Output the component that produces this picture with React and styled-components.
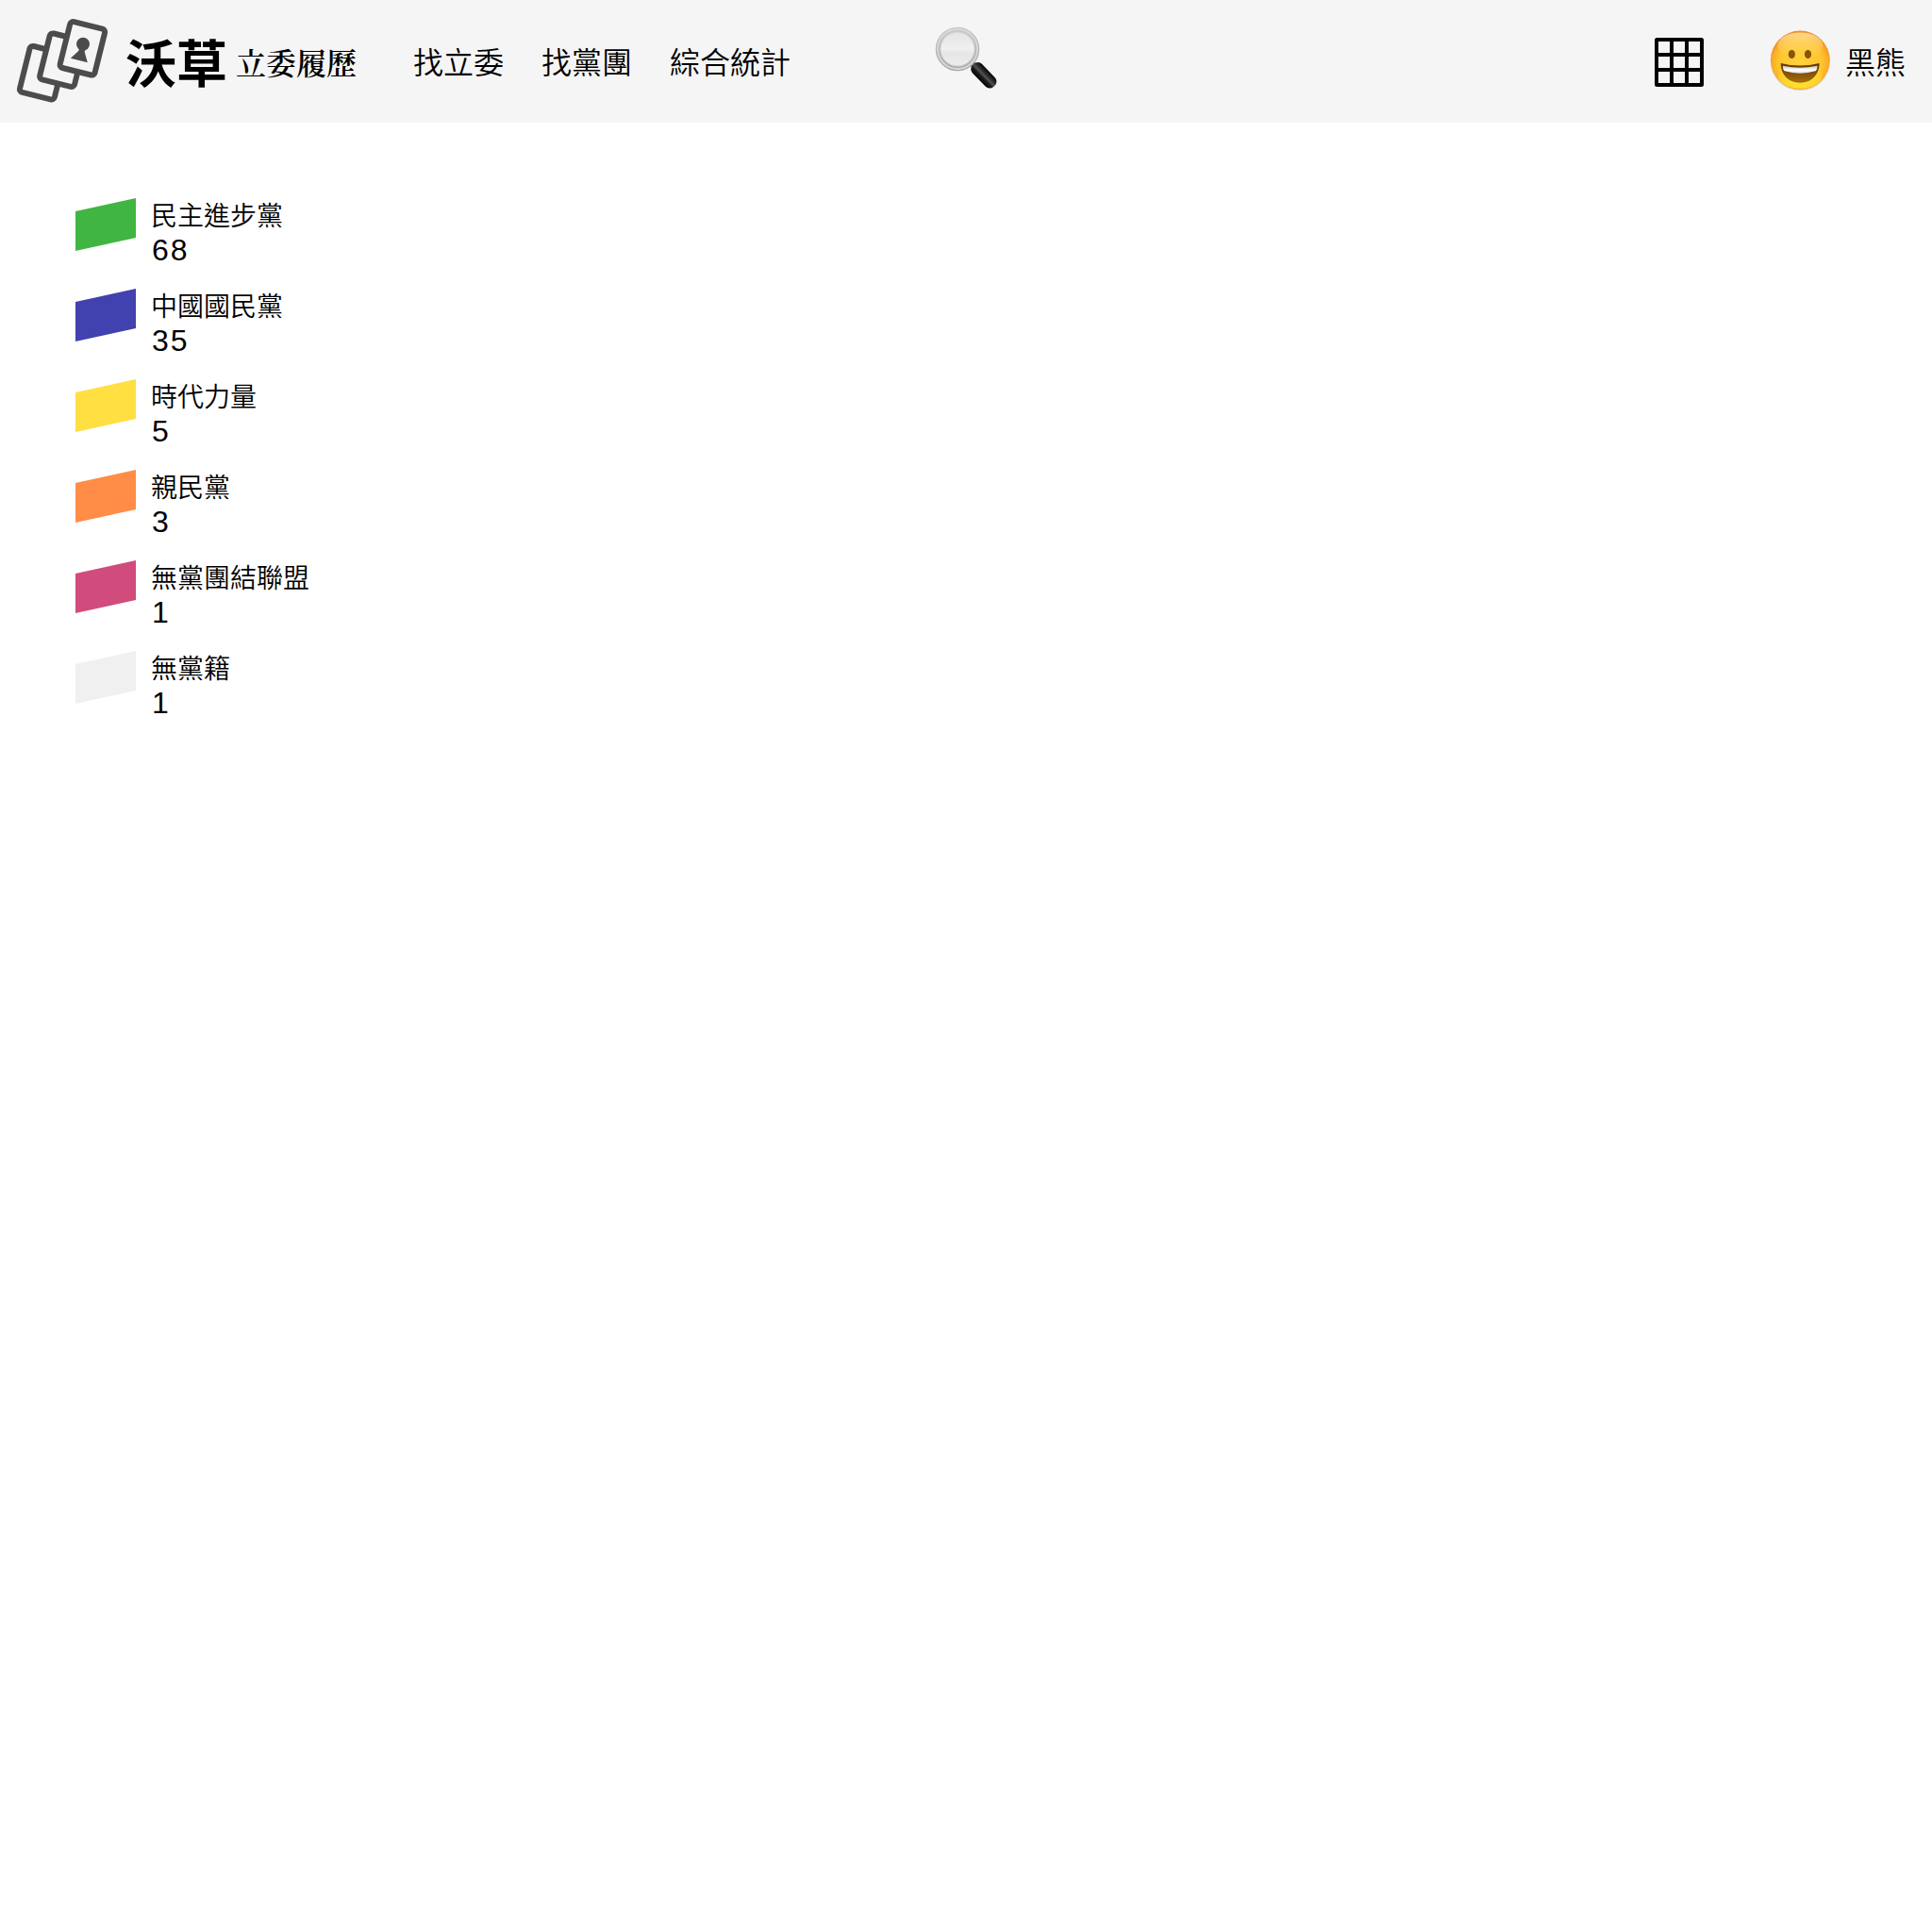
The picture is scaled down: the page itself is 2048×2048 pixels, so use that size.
import React from "react";
import styled, { createGlobalStyle } from "styled-components";

const GlobalStyle = createGlobalStyle`
  * { box-sizing: border-box; }
  body {
    margin: 0;
    background: #fff;
    color: #000;
    font-family: "Noto Sans CJK TC", "Liberation Sans", sans-serif;
    font-weight: 350;
  }
`;

const Header = styled.header`
  display: flex;
  align-items: center;
  height: 130px;
  padding: 0 28px 0 18px;
  background: #f5f5f5;
`;

const Brand = styled.a`
  display: flex;
  align-items: center;
  height: 130px;
  width: 420px;
`;

const CardsLogo = styled.svg`
  display: block;
  width: 97px;
  height: 90px;
  flex: none;
  overflow: visible;
`;

const Wordmark = styled.span`
  width: 108px;
  margin-left: 18px;
  font-size: 54px;
  line-height: 130px;
  font-weight: 700;
  white-space: nowrap;
`;

const SiteName = styled.span`
  margin-left: 9px;
  font-family: "Noto Serif CJK JP", "Noto Serif CJK TC", "Noto Sans CJK TC", serif;
  font-size: 32px;
  line-height: 128px;
  font-weight: 600;
  white-space: nowrap;
`;

const Nav = styled.nav`
  display: flex;
  gap: 40px;
  width: 552px;
`;

const NavLink = styled.a`
  margin-top: -2px;
  font-size: 32px;
  line-height: 48px;
  white-space: nowrap;
`;

const SearchButton = styled.a`
  display: flex;
  width: 68px;
  height: 68px;
  margin-top: -8px;
`;

const Account = styled.div`
  display: flex;
  align-items: center;
  margin-left: auto;
`;

const MenuIcon = styled.svg`
  display: block;
  width: 52px;
  height: 52px;
  margin: 2px 70px 0 0;
`;

const Face = styled.svg`
  display: block;
  width: 66px;
  height: 66px;
  margin: -3px 14px 0 0;
`;

const PartyList = styled.ul`
  display: flex;
  flex-direction: column;
  margin: 0;
  padding: 80px;
  list-style: none;
`;

const PartyRow = styled.li`
  display: flex;
  height: 96px;
`;

const Flag = styled.div`
  width: 64px;
  height: 56px;
  margin-right: 16px;
  background: ${(p) => p.$color};
  clip-path: polygon(0 14px, 100% 0, 100% 42px, 0 100%);
`;

const PartyName = styled.div`
  margin-bottom: 2px;
  font-size: 28px;
  line-height: 35px;
`;

const PartyCount = styled.div`
  padding-left: 1px;
  font-family: "Liberation Sans", Arial, sans-serif;
  font-size: 32px;
  line-height: 37px;
  letter-spacing: 2px;
`;

const parties = [
  ["民主進步黨", 68, "#41b541"],
  ["中國國民黨", 35, "#4141af"],
  ["時代力量", 5, "#ffdf41"],
  ["親民黨", 3, "#ff8d47"],
  ["無黨團結聯盟", 1, "#d14b7c"],
  ["無黨籍", 1, "#f0f0f0"],
];

function Logo() {
  return (
    <CardsLogo viewBox="18 20 97 90" fill="none" stroke="#4c4c4c" strokeWidth="6" strokeLinejoin="round">
      <g fill="#f5f5f5">
        <rect x="-19" y="-25.2" width="38" height="50.4" rx="3.5" transform="translate(44.7 77.2) rotate(14)" />
        <rect x="-19" y="-25.2" width="38" height="50.4" rx="3.5" transform="translate(65.9 63.7) rotate(14)" />
        <rect x="-19" y="-25.2" width="38" height="50.4" rx="3.5" transform="translate(87.4 51.3) rotate(14)" />
      </g>
      <circle cx="88" cy="46.8" r="7" fill="#4c4c4c" stroke="none" />
      <path d="M84.5 51 L83 54.3 L74.8 61.7 L92.8 66.3 L89.8 55.5 L90 51 Z" fill="#4c4c4c" stroke="none" />
    </CardsLogo>
  );
}

function Magnifier() {
  return (
    <svg width="68" height="68" viewBox="990 27 68 68">
      <defs>
        <linearGradient id="rim" x1="0" y1="0" x2="0" y2="1">
          <stop offset="0" stopColor="#c9c9c9" />
          <stop offset="1" stopColor="#aaa" />
        </linearGradient>
        <linearGradient id="glass" x1="0" y1="0" x2="0" y2="1">
          <stop offset="0" stopColor="#e2e2e2" />
          <stop offset=".5" stopColor="#f0f0f0" />
          <stop offset=".6" stopColor="#e6e6e6" />
          <stop offset="1" stopColor="#ededed" />
        </linearGradient>
        <linearGradient id="handle" x1="0" y1="0" x2="0" y2="1">
          <stop offset="0" stopColor="#050505" />
          <stop offset=".35" stopColor="#333" />
          <stop offset=".5" stopColor="#555" />
          <stop offset=".65" stopColor="#222" />
          <stop offset="1" stopColor="#000" />
        </linearGradient>
      </defs>
      <path d="M1029 66 L1035 72" stroke="#333" strokeWidth="6" />
      <path d="M1028 68.5 L1032 64.5" stroke="#888" strokeWidth="2" />
      <g transform="translate(1042.8 79.8) rotate(46)">
        <rect x="-16" y="-6.9" width="32" height="13.8" rx="6" fill="url(#handle)" />
      </g>
      <circle cx="1015" cy="52" r="20.8" fill="url(#glass)" stroke="url(#rim)" strokeWidth="5" />
      <circle cx="1015" cy="52" r="21" fill="none" stroke="#d8d8d8" strokeWidth="1.8" />
      <circle cx="1015" cy="52" r="18" fill="none" stroke="#cacaca" strokeWidth=".8" />
    </svg>
  );
}

function Smiley() {
  return (
    <Face viewBox="1876 30.5 66 66">
      <defs>
        <radialGradient id="skin" cx=".5" cy=".55" r=".52">
          <stop offset="0" stopColor="#ffd23c" />
          <stop offset=".7" stopColor="#fec52f" />
          <stop offset=".9" stopColor="#fbae26" />
          <stop offset="1" stopColor="#f1912c" />
        </radialGradient>
        <linearGradient id="shine" x1="0" y1="0" x2="0" y2="1">
          <stop offset="0" stopColor="#ffe3a0" stopOpacity=".85" />
          <stop offset="1" stopColor="#ffd65a" stopOpacity="0" />
        </linearGradient>
        <linearGradient id="chin" x1="0" y1="0" x2="0" y2="1">
          <stop offset="0" stopColor="#ffe52f" stopOpacity="0" />
          <stop offset="1" stopColor="#ffec2f" stopOpacity=".75" />
        </linearGradient>
        <linearGradient id="mouth" x1="0" y1="0" x2="0" y2="1">
          <stop offset="0" stopColor="#643600" />
          <stop offset="1" stopColor="#a76d0b" />
        </linearGradient>
        <linearGradient id="teeth" x1="0" y1="0" x2="0" y2="1">
          <stop offset="0" stopColor="#c8c8cc" />
          <stop offset=".6" stopColor="#fff" />
          <stop offset="1" stopColor="#dcdce0" />
        </linearGradient>
      </defs>
      <circle cx="1908.3" cy="64" r="31.7" fill="#c9b9a0" opacity=".5" />
      <circle cx="1908.3" cy="63.3" r="31.3" fill="url(#skin)" />
      <ellipse cx="1908.3" cy="48" rx="24" ry="14" fill="url(#shine)" />
      <ellipse cx="1908.3" cy="80" rx="23" ry="13" fill="url(#chin)" />
      <ellipse cx="1899.3" cy="57" rx="3.6" ry="4.6" fill="#87540a" />
      <ellipse cx="1916.5" cy="57" rx="3.6" ry="4.6" fill="#87540a" />
      <path d="M1887.6 66.5 Q1908 71.5 1928.6 66.5 C1928.6 79 1920 87.2 1908.2 87.2 C1896 87.2 1887.6 79 1887.6 66.5Z" fill="url(#mouth)" />
      <path d="M1889.8 69.3 Q1908 73.3 1926.5 69.3 Q1926.2 73.8 1924.5 74.8 Q1908 79.5 1891.8 74.8 Q1890 73.8 1889.8 69.3Z" fill="url(#teeth)" />
    </Face>
  );
}

function GridIcon() {
  return (
    <MenuIcon viewBox="0 0 52 52" fill="none" stroke="#000" strokeWidth="4">
      <rect x="2" y="2" width="48" height="48" rx=".5" strokeLinejoin="round" />
      <path d="M18 2V50M34 2V50M2 18H50M2 34H50" />
    </MenuIcon>
  );
}

export default function App() {
  return (
    <>
      <GlobalStyle />
      <Header>
        <Brand>
          <Logo />
          <Wordmark>沃草</Wordmark>
          <SiteName>立委履歷</SiteName>
        </Brand>
        <Nav>
          <NavLink>找立委</NavLink>
          <NavLink>找黨團</NavLink>
          <NavLink>綜合統計</NavLink>
        </Nav>
        <SearchButton>
          <Magnifier />
        </SearchButton>
        <Account>
          <GridIcon />
          <Smiley />
          <NavLink>黑熊</NavLink>
        </Account>
      </Header>
      <PartyList>
        {parties.map(([name, count, color]) => (
          <PartyRow key={name}>
            <Flag $color={color} />
            <div>
              <PartyName>{name}</PartyName>
              <PartyCount>{count}</PartyCount>
            </div>
          </PartyRow>
        ))}
      </PartyList>
    </>
  );
}
